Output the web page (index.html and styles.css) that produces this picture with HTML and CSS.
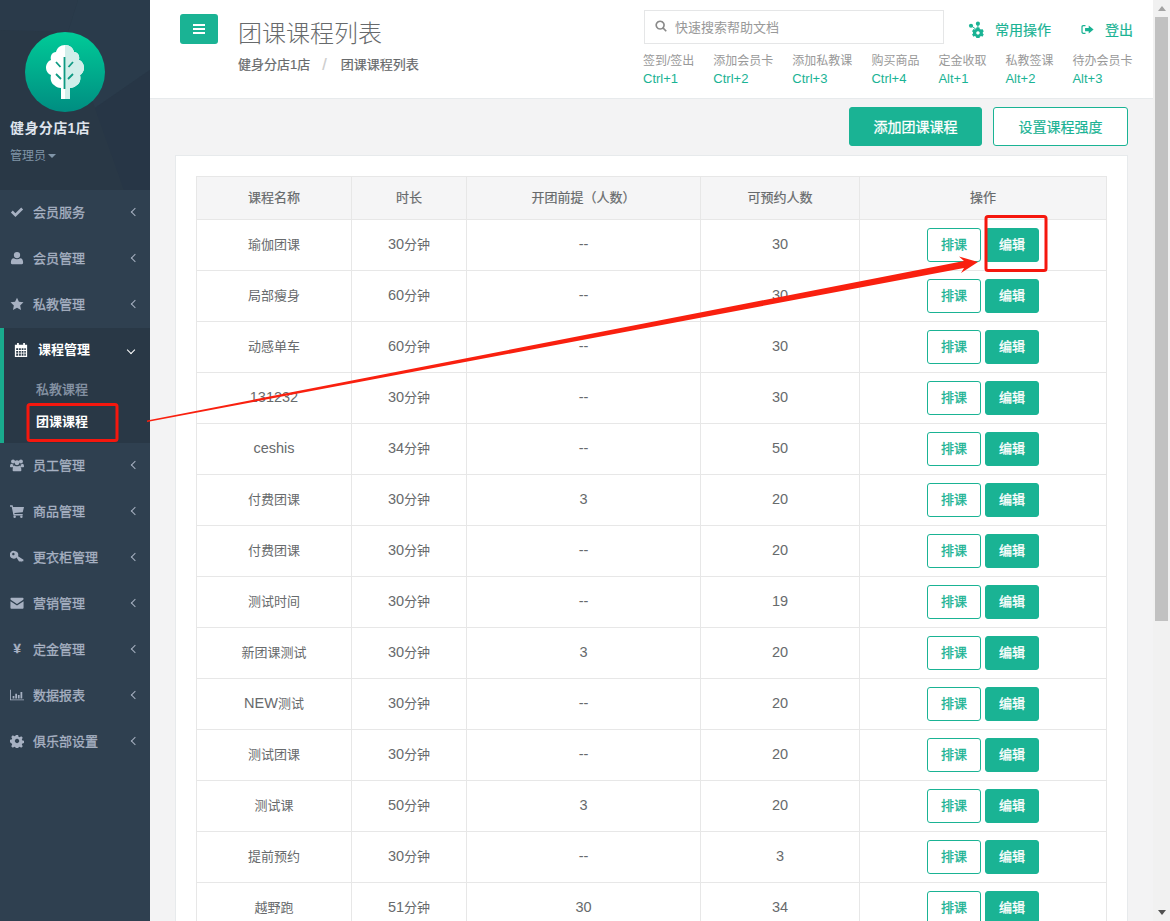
FILE: index.html
```html
<!DOCTYPE html>
<html lang="en">
<head>
    <meta charset="utf-8">
    <link rel="stylesheet" href="styles.css">
    <title>团课课程列表</title>
</head>
<body>
    <svg class="icon-defs" width="0" height="0">
        <symbol id="i-check" viewBox="0 0 16 16"><path d="M1 8.600 3.200 6.400 6.200 9.400 12.800 2.800 15 5 6.200 13.800Z"/></symbol>
        <symbol id="i-user" viewBox="0 0 16 16"><circle cx="8" cy="4.600" r="3.600"/><path d="M2.400 15c-1 0-1.400-.6-1.400-1.500C1 10.600 2 8.200 4.400 8.200 5.400 9 6.600 9.500 8 9.500s2.600-.5 3.600-1.300C14 8.200 15 10.600 15 13.500c0 .9-.5 1.500-1.400 1.500Z"/></symbol>
        <symbol id="i-star" viewBox="0 0 16 16"><path d="M8 .8 10.200 5.500 15.400 6.100 11.600 9.600 12.600 14.800 8 12.200 3.400 14.800 4.400 9.600 .6 6.100 5.800 5.500Z"/></symbol>
        <symbol id="i-cal" viewBox="0 0 16 16"><path fill-rule="evenodd" d="M3.500 0h2v2h5V0h2v2H15v14H1V2h2.500ZM2.500 6v2h2.300V6ZM5.800 6v2h2V6ZM8.800 6v2h2V6ZM11.800 6v2h1.700V6ZM2.500 9v2h2.300V9ZM5.800 9v2h2V9ZM8.800 9v2h2V9ZM11.800 9v2h1.700V9ZM2.500 12v2.500h2.300V12ZM5.800 12v2.500h2V12ZM8.800 12v2.500h2V12ZM11.800 12v2.500h1.700V12Z"/></symbol>
        <symbol id="i-users" viewBox="0 0 16 16"><circle cx="3.500" cy="4" r="2.300"/><circle cx="12.500" cy="4" r="2.300"/><circle cx="8" cy="5.500" r="2.800"/><path d="M0 10c0-2 .6-3.300 1.800-3.300.6.500 1.300.8 2.100.8-.3 1-.1 2 .4 3H.8C.3 10.500 0 10.300 0 10ZM16 10c0-2-.6-3.300-1.800-3.300-.6.500-1.300.8-2.100.8.300 1 .1 2-.4 3h3.500c.5 0 .8-.2.800-.5ZM4 15c-.6 0-1-.4-1-1.100C3 11 3.800 8.500 5.300 8.500c.7.600 1.600 1 2.700 1s2-.4 2.700-1c1.500 0 2.300 2.500 2.300 5.400 0 .7-.4 1.100-1 1.100Z"/></symbol>
        <symbol id="i-cart" viewBox="0 0 16 16"><path d="M0 1.500h3L3.500 3.500H16L14.500 9.500 5 10.300 5.300 11.500H14.500V13H4L1.900 3H0Z"/><circle cx="5.300" cy="14.500" r="1.400"/><circle cx="13" cy="14.500" r="1.400"/></symbol>
        <symbol id="i-key" viewBox="0 0 16 16"><path fill-rule="evenodd" d="M5 1a4.500 4.500 0 0 1 4.200 6L15.500 11 15 13 13.500 12.500 12.800 14 11.500 12.500 10.500 13.300 7.500 8.500A4.500 4.500 0 1 1 5 1ZM3.800 3.200a1.400 1.400 0 1 0 .1 0Z"/></symbol>
        <symbol id="i-mail" viewBox="0 0 16 16"><path d="M1.500 2h13c.6 0 1 .4 1 1 0 .8-.5 1.400-1.100 1.900L8 9 1.600 4.900C1 4.500 .5 3.800 .5 3c0-.6.400-1 1-1ZM.5 6 8 10.800 15.500 6V13.500c0 .6-.4 1-1 1h-13c-.6 0-1-.4-1-1Z"/></symbol>
        <symbol id="i-chart" viewBox="0 0 16 16"><path d="M0 2h1v11h15v1H0ZM3 9h2v3H3ZM6 6.500h2V12H6ZM9 8h2v4H9ZM12 4.500h2V12h-2Z"/></symbol>
        <symbol id="i-gear" viewBox="0 0 16 16"><path fill-rule="evenodd" d="M6.700 1h2.600l.4 2 1.300.6 1.800-1.100 1.800 1.800-1.100 1.800.6 1.300 1.900.4v2.600l-1.900.4-.6 1.300 1.100 1.800-1.800 1.800-1.800-1.100-1.300.6-.4 1.900H6.700l-.4-1.900-1.300-.6-1.800 1.100-1.800-1.800 1.100-1.800-.6-1.300L0 9.300V6.700L1.900 6.300l.6-1.300L1.400 3.300 3.200 1.500 5 2.600l1.300-.6ZM8 5.500a2.500 2.500 0 1 0 .1 0Z"/></symbol>
        <symbol id="i-search" viewBox="0 0 16 16"><path fill="none" stroke="currentColor" stroke-width="2.200" d="M6.800 1.600a5.200 5.200 0 1 0 .1 0ZM10.600 10.600 15 15"/></symbol>
        <symbol id="i-logout" viewBox="0 0 16 16"><path d="M5.500 2.500V4H3C2.400 4 2 4.400 2 5v6c0 .6.400 1 1 1h2.500v1.500H2.800C1.300 13.500.5 12.600.5 11.200V4.800C.5 3.400 1.300 2.500 2.800 2.500ZM9.500 3 15.500 8 9.500 13V10H5V6H9.500Z"/></symbol>
        <symbol id="i-ops" viewBox="0 0 18 18"><circle cx="3.200" cy="5" r="2.200"/><circle cx="10.500" cy="2.800" r="2.200"/><path fill-rule="evenodd" d="M8.800 7h3.400l.3 1.400 1.400.7 1.300-.6 1.500 2.400-1 .9v1.500l1 .9-1.500 2.400-1.300-.6-1.400.7-.3 1.400H8.800l-.3-1.400-1.400-.7-1.300.6-1.500-2.400 1-.9v-1.500l-1-.9 1.500-2.400 1.300.6 1.400-.7ZM10.500 10.800a1.800 1.800 0 1 0 .1 0Z"/><path fill="none" stroke="currentColor" stroke-width="1" d="M3.500 5 10 10M10.500 3V10"/></symbol>
    </svg>

    <aside class="sidebar">
        <div class="profile">
            <svg class="profile-bg" viewBox="0 0 150 190" preserveAspectRatio="none">
                <path d="M0 0H78L68 32 0 30Z" fill="#2a3a4a"/>
                <path d="M78 0H150V70L95 108 68 32Z" fill="#2a3b4b"/>
                <path d="M95 108 150 70V190H124Z" fill="#273646"/>
            </svg>
            <svg class="logo" viewBox="0 0 80 80">
                <defs>
                    <linearGradient id="logo-fill" x1="0" y1="0" x2="0" y2="1">
                        <stop offset="0" stop-color="#00cb98"/>
                        <stop offset="1" stop-color="#008d81"/>
                    </linearGradient>
                </defs>
                <circle cx="40" cy="40" r="40" fill="url(#logo-fill)"/>
                <path d="M40 13c5 0 8 3 9 7 4 0 6 4 5 8 3 1 5 4 5 8 0 3-2 6-4 7 1 4 0 8-3 10-2 2-5 3-7 3v11H36V56c-3 0-5-1-7-3-3-2-4-6-3-10-3-1-5-4-5-7 0-4 2-7 5-8-1-4 1-8 5-8 1-4 4-7 9-7Z" fill="#fff"/>
                <path d="M40 13c5 0 8 3 9 7 4 0 6 4 5 8 3 1 5 4 5 8 0 3-2 6-4 7 1 4 0 8-3 10-2 2-5 3-7 3v11H40Z" fill="#d2eeea"/>
                <path d="M39.500 25V57M31 30 35.500 35M48 30 43.500 35M31 42 36 47M48 42 43 47" fill="none" stroke="#0f9a83" stroke-width="1.800"/>
            </svg>
            <div class="shop-name">健身分店1店</div>
            <div class="role">管理员<span class="caret"></span></div>
        </div>
        <nav class="menu">
            <a class="menu-item"><svg class="menu-icon"><use href="#i-check"/></svg><span class="menu-text">会员服务</span><span class="chevron"></span></a>
            <a class="menu-item"><svg class="menu-icon"><use href="#i-user"/></svg><span class="menu-text">会员管理</span><span class="chevron"></span></a>
            <a class="menu-item"><svg class="menu-icon"><use href="#i-star"/></svg><span class="menu-text">私教管理</span><span class="chevron"></span></a>
            <div class="menu-group">
                <a class="menu-item active"><svg class="menu-icon"><use href="#i-cal"/></svg><span class="menu-text">课程管理</span><span class="chevron open"></span></a>
                <a class="sub-item">私教课程</a>
                <a class="sub-item current">团课课程</a>
            </div>
            <a class="menu-item"><svg class="menu-icon"><use href="#i-users"/></svg><span class="menu-text">员工管理</span><span class="chevron"></span></a>
            <a class="menu-item"><svg class="menu-icon"><use href="#i-cart"/></svg><span class="menu-text">商品管理</span><span class="chevron"></span></a>
            <a class="menu-item"><svg class="menu-icon"><use href="#i-key"/></svg><span class="menu-text">更衣柜管理</span><span class="chevron"></span></a>
            <a class="menu-item"><svg class="menu-icon"><use href="#i-mail"/></svg><span class="menu-text">营销管理</span><span class="chevron"></span></a>
            <a class="menu-item"><span class="menu-icon yen">¥</span><span class="menu-text">定金管理</span><span class="chevron"></span></a>
            <a class="menu-item"><svg class="menu-icon"><use href="#i-chart"/></svg><span class="menu-text">数据报表</span><span class="chevron"></span></a>
            <a class="menu-item"><svg class="menu-icon"><use href="#i-gear"/></svg><span class="menu-text">俱乐部设置</span><span class="chevron"></span></a>
        </nav>
    </aside>

    <div class="main">
        <header class="topbar">
            <button class="toggle" type="button"><span></span><span></span><span></span></button>
            <div class="heading">
                <h1>团课课程列表</h1>
                <div class="crumbs"><span>健身分店1店</span><span class="slash">/</span><span>团课课程列表</span></div>
            </div>
            <div class="top-right">
                <div class="top-row">
                    <div class="search"><svg class="search-icon"><use href="#i-search"/></svg>快速搜索帮助文档</div>
                    <a class="top-link ops"><svg class="ops-icon"><use href="#i-ops"/></svg>常用操作</a>
                    <a class="top-link logout"><svg class="logout-icon"><use href="#i-logout"/></svg>登出</a>
                </div>
                <div class="shortcuts">
                    <div class="shortcut">签到/签出<b>Ctrl+1</b></div>
                    <div class="shortcut">添加会员卡<b>Ctrl+2</b></div>
                    <div class="shortcut">添加私教课<b>Ctrl+3</b></div>
                    <div class="shortcut">购买商品<b>Ctrl+4</b></div>
                    <div class="shortcut">定金收取<b>Alt+1</b></div>
                    <div class="shortcut">私教签课<b>Alt+2</b></div>
                    <div class="shortcut">待办会员卡<b>Alt+3</b></div>
                </div>
            </div>
        </header>

        <div class="content">
            <div class="actions">
                <button class="btn btn-fill btn-large" type="button">添加团课课程</button>
                <button class="btn btn-line btn-large" type="button">设置课程强度</button>
            </div>
            <div class="card">
                <table class="course-table">
                    <thead>
                        <tr><th class="c-name">课程名称</th><th class="c-time">时长</th><th class="c-min">开团前提（人数）</th><th class="c-max">可预约人数</th><th>操作</th></tr>
                    </thead>
                    <tbody>
                        <tr><td>瑜伽团课</td><td><span class="num">30</span>分钟</td><td class="num">--</td><td class="num">30</td><td><button class="btn btn-line" type="button">排课</button><button class="btn btn-fill" type="button">编辑</button></td></tr>
                        <tr><td>局部瘦身</td><td><span class="num">60</span>分钟</td><td class="num">--</td><td class="num">30</td><td><button class="btn btn-line" type="button">排课</button><button class="btn btn-fill" type="button">编辑</button></td></tr>
                        <tr><td>动感单车</td><td><span class="num">60</span>分钟</td><td class="num">--</td><td class="num">30</td><td><button class="btn btn-line" type="button">排课</button><button class="btn btn-fill" type="button">编辑</button></td></tr>
                        <tr><td class="num">131232</td><td><span class="num">30</span>分钟</td><td class="num">--</td><td class="num">30</td><td><button class="btn btn-line" type="button">排课</button><button class="btn btn-fill" type="button">编辑</button></td></tr>
                        <tr><td class="num">ceshis</td><td><span class="num">34</span>分钟</td><td class="num">--</td><td class="num">50</td><td><button class="btn btn-line" type="button">排课</button><button class="btn btn-fill" type="button">编辑</button></td></tr>
                        <tr><td>付费团课</td><td><span class="num">30</span>分钟</td><td class="num">3</td><td class="num">20</td><td><button class="btn btn-line" type="button">排课</button><button class="btn btn-fill" type="button">编辑</button></td></tr>
                        <tr><td>付费团课</td><td><span class="num">30</span>分钟</td><td class="num">--</td><td class="num">20</td><td><button class="btn btn-line" type="button">排课</button><button class="btn btn-fill" type="button">编辑</button></td></tr>
                        <tr><td>测试时间</td><td><span class="num">30</span>分钟</td><td class="num">--</td><td class="num">19</td><td><button class="btn btn-line" type="button">排课</button><button class="btn btn-fill" type="button">编辑</button></td></tr>
                        <tr><td>新团课测试</td><td><span class="num">30</span>分钟</td><td class="num">3</td><td class="num">20</td><td><button class="btn btn-line" type="button">排课</button><button class="btn btn-fill" type="button">编辑</button></td></tr>
                        <tr><td><span class="num">NEW</span>测试</td><td><span class="num">30</span>分钟</td><td class="num">--</td><td class="num">20</td><td><button class="btn btn-line" type="button">排课</button><button class="btn btn-fill" type="button">编辑</button></td></tr>
                        <tr><td>测试团课</td><td><span class="num">30</span>分钟</td><td class="num">--</td><td class="num">20</td><td><button class="btn btn-line" type="button">排课</button><button class="btn btn-fill" type="button">编辑</button></td></tr>
                        <tr><td>测试课</td><td><span class="num">50</span>分钟</td><td class="num">3</td><td class="num">20</td><td><button class="btn btn-line" type="button">排课</button><button class="btn btn-fill" type="button">编辑</button></td></tr>
                        <tr><td>提前预约</td><td><span class="num">30</span>分钟</td><td class="num">--</td><td class="num">3</td><td><button class="btn btn-line" type="button">排课</button><button class="btn btn-fill" type="button">编辑</button></td></tr>
                        <tr><td>越野跑</td><td><span class="num">51</span>分钟</td><td class="num">30</td><td class="num">34</td><td><button class="btn btn-line" type="button">排课</button><button class="btn btn-fill" type="button">编辑</button></td></tr>
                    </tbody>
                </table>
            </div>
        </div>
    </div>

    <!-- window scrollbar, as it shows in the screenshot -->
    <div class="scrollbar">
        <span class="scroll-up"></span>
        <span class="scroll-thumb"></span>
        <span class="scroll-down"></span>
    </div>

    <!-- red marks drawn on top of the screenshot -->
    <svg class="markup" viewBox="0 0 1170 921">
        <rect x="28" y="404.500" width="89" height="36" rx="2" fill="none" stroke="#f5170e" stroke-width="3"/>
        <rect x="986" y="216.500" width="60" height="54" rx="2" fill="none" stroke="#f5170e" stroke-width="3"/>
        <path d="M147 420.500 964 261 959 256.500 978 262 961 273 964 268 147 422Z" fill="#f9200f"/>
    </svg>
</body>
</html>
```

FILE: styles.css
```css
body {
    margin: 0;
    display: flex;
    min-height: 1355px;
    padding-right: 17px;
    background-color: #f3f3f4;
    font-family: "Liberation Sans", "Noto Sans CJK SC", sans-serif;
    font-size: 13px;
    color: #676a6c;
}

a {
    text-decoration: none;
}

.icon-defs {
    position: absolute;
}

.sidebar {
    width: 150px;
    flex-shrink: 0;
    background-color: #2f4050;
}

.profile {
    position: relative;
    height: 158px;
    padding: 32px 0 0 10px;
    background-color: #293846;
    overflow: hidden;
}

.profile-bg {
    position: absolute;
    left: 0;
    top: 0;
    width: 150px;
    height: 190px;
}

.logo {
    position: relative;
    display: block;
    width: 80px;
    height: 80px;
    margin-left: 15px;
}

.shop-name {
    position: relative;
    margin-top: 6px;
    font-size: 14px;
    font-weight: 700;
    letter-spacing: .4px;
    color: #dfe4ed;
    line-height: 20px;
}

.role {
    position: relative;
    margin-top: 8px;
    font-size: 12px;
    color: #8095a8;
    line-height: 20px;
}

.caret {
    display: inline-block;
    margin-left: 2px;
    vertical-align: 2px;
    border-top: 4px solid #8095a8;
    border-left: 4px solid transparent;
    border-right: 4px solid transparent;
}

.menu-item {
    box-sizing: border-box;
    display: flex;
    align-items: center;
    height: 46px;
    padding: 0 12px 4px 10px;
    -webkit-text-stroke: .3px;
    color: #a7b1c2;
}

.menu-icon {
    width: 14px;
    height: 14px;
    margin: 2px 9px 0 0;
    fill: #a7b1c2;
    flex-shrink: 0;
}

.yen {
    font-size: 13px;
    font-weight: 700;
    text-align: center;
    line-height: 13px;
}

.menu-text {
    flex: 1;
}

.chevron {
    width: 5px;
    height: 5px;
    margin-top: 2px;
    border-left: 1.500px solid #a7b1c2;
    border-bottom: 1.500px solid #a7b1c2;
    transform: rotate(45deg);
}

.chevron.open {
    margin-right: 4px;
    border-color: #fff;
    transform: rotate(-45deg);
}

.menu-group {
    height: 115px;
    background-color: #293846;
    border-left: 4px solid #19aa8d;
}

.menu-group .menu-item {
    height: 45px;
    padding-left: 10px;
    font-weight: 700;
    -webkit-text-stroke: 0;
    color: #fff;
}

.menu-group .menu-icon {
    margin-right: 10px;
    fill: #fff;
}

.sub-item {
    display: block;
    height: 32px;
    padding-left: 32px;
    line-height: 34px;
    -webkit-text-stroke: .3px;
    color: #8a97a8;
}

.sub-item.current {
    color: #fff;
    font-weight: 700;
    -webkit-text-stroke: 0;
}

.main {
    flex: 1;
    min-width: 0;
}

.topbar {
    display: flex;
    height: 98px;
    background-color: #fff;
    border-bottom: 1px solid #e7eaec;
    padding-left: 30px;
}

.toggle {
    width: 38px;
    height: 30px;
    margin-top: 14px;
    padding: 0;
    display: flex;
    flex-direction: column;
    align-items: center;
    justify-content: center;
    gap: 2px;
    border: none;
    border-radius: 3px;
    background-color: #1ab394;
}

.toggle span {
    width: 12px;
    height: 2px;
    background-color: #fff;
}

.heading {
    margin-left: 20px;
}

h1 {
    margin: 17px 0 0;
    font-size: 24px;
    font-weight: 300;
    line-height: 34px;
    color: #676a6c;
}

.crumbs {
    display: flex;
    margin-top: 5px;
    line-height: 18px;
    -webkit-text-stroke: .2px;
}

.slash {
    margin: 0 14px 0 12px;
    font-size: 16px;
    color: #ccc;
}

.top-right {
    margin-left: auto;
    padding-right: 20px;
}

.top-row {
    display: flex;
    align-items: center;
    height: 34px;
    margin-top: 10px;
    padding-left: 1px;
}

.search {
    box-sizing: border-box;
    display: flex;
    align-items: center;
    width: 300px;
    height: 34px;
    padding-bottom: 2px;
    border: 1px solid #e5e6e7;
    color: #999;
}

.search-icon {
    width: 12px;
    height: 12px;
    margin: 0 8px 0 10px;
    color: #8a8a8a;
}

.top-link {
    display: flex;
    align-items: center;
    margin-top: 4px;
    font-size: 14px;
    -webkit-text-stroke: .2px;
    color: #1ab394;
}

.ops {
    margin-left: 24px;
}

.ops-icon {
    width: 17px;
    height: 17px;
    margin-right: 10px;
    fill: #1ab394;
    color: #1ab394;
}

.logout {
    margin-left: 30px;
}

.logout-icon {
    width: 13px;
    height: 13px;
    margin-right: 11px;
    fill: #1ab394;
}

.shortcuts {
    display: flex;
    gap: 19px;
    margin-top: 9px;
}

.shortcut {
    font-size: 12px;
    line-height: 17px;
    color: #999;
}

.shortcut b {
    display: block;
    font-size: 13px;
    font-weight: 400;
    color: #1ab394;
}

.content {
    padding: 8px 25px 0;
}

.actions {
    display: flex;
    justify-content: flex-end;
    gap: 11px;
    height: 40px;
}

.btn {
    width: 54px;
    height: 34px;
    padding: 0 0 2px;
    border: 1px solid #1ab394;
    border-radius: 3px;
    font-family: inherit;
    font-size: 13px;
    -webkit-text-stroke: .3px;
}

.btn-fill {
    background-color: #1ab394;
    color: #fff;
}

.btn-line {
    background-color: #fff;
    color: #1ab394;
}

.btn-large {
    width: 133px;
    height: 39px;
    font-size: 14px;
}

.btn-large.btn-line {
    width: 135px;
    -webkit-text-stroke: .2px;
}

.card {
    margin-top: 8px;
    padding: 20px;
    background-color: #fff;
    border: 1px solid #e7eaec;
}

.course-table {
    width: 911px;
    table-layout: fixed;
    border-collapse: collapse;
    text-align: center;
}

.course-table th,
.course-table td {
    box-sizing: border-box;
    border: 1px solid #e7e7e7;
    padding: 0 0 4px;
}

.course-table th {
    height: 43px;
    background-color: #f5f5f6;
    font-weight: 400;
    -webkit-text-stroke: .2px;
}

.course-table td {
    height: 51px;
}

.course-table td:last-child {
    padding-bottom: 1px;
}

.num {
    font-size: 14.500px;
}

.course-table td.num {
    padding-bottom: 2px;
}

.c-name {
    width: 155px;
}

.c-time {
    width: 115px;
}

.c-min {
    width: 234px;
}

.c-max {
    width: 159px;
}

.course-table .btn + .btn {
    margin-left: 4px;
}

.scrollbar {
    position: fixed;
    right: 0;
    top: 0;
    bottom: 0;
    width: 17px;
    background-color: #f1f1f1;
}

.scroll-thumb {
    position: absolute;
    left: 2px;
    top: 17px;
    width: 13px;
    height: 604px;
    background-color: #c1c1c1;
}

.scroll-up,
.scroll-down {
    position: absolute;
    left: 5px;
    border-left: 4px solid transparent;
    border-right: 4px solid transparent;
}

.scroll-up {
    top: 6px;
    border-bottom: 5px solid #a3a3a3;
}

.scroll-down {
    bottom: 6px;
    border-top: 5px solid #505050;
}

.markup {
    position: absolute;
    left: 0;
    top: 0;
    width: 1170px;
    height: 921px;
    pointer-events: none;
}
```
